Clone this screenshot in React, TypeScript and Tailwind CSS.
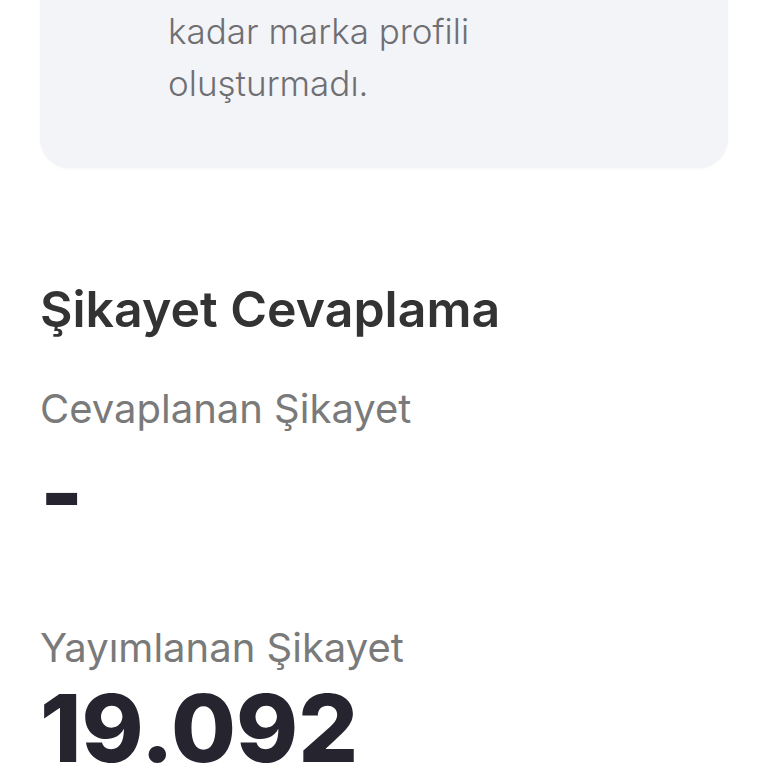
export default function App() {
  return (
    <div
      className="min-h-screen bg-white overflow-hidden"
      style={{ fontFamily: "Inter, 'Noto Sans', sans-serif" }}
    >
      <div className="px-10">
        {/* Marka profili kartı */}
        <div className="bg-[#f3f4f8] rounded-b-[30px] pt-[5px] pb-[59px] pl-[128px] shadow-[0_1px_3px_rgba(0,0,0,0.04)]">
          <p className="text-[35px] leading-[52px] font-light text-[#6f6f73]">
            kadar marka profili
            <br />
            oluşturmadı.
          </p>
        </div>

        {/* Şikayet Cevaplama */}
        <h2 className="mt-[116px] text-[50px] leading-none font-semibold text-[#333333]">
          Şikayet Cevaplama
        </h2>

        <div className="mt-[55px] text-[40px] leading-none font-normal text-[#7a7a7a]">
          Cevaplanan Şikayet
        </div>
        <div className="mt-[18px] text-[92px] leading-none font-extrabold text-[#25242f]">
          -
        </div>

        <div className="mt-[89px] text-[40px] leading-none font-normal text-[#7a7a7a]">
          Yayımlanan Şikayet
        </div>
        <div className="mt-[13px] text-[94px] leading-none font-extrabold text-[#25242f]">
          19.092
        </div>
      </div>
    </div>
  );
}
